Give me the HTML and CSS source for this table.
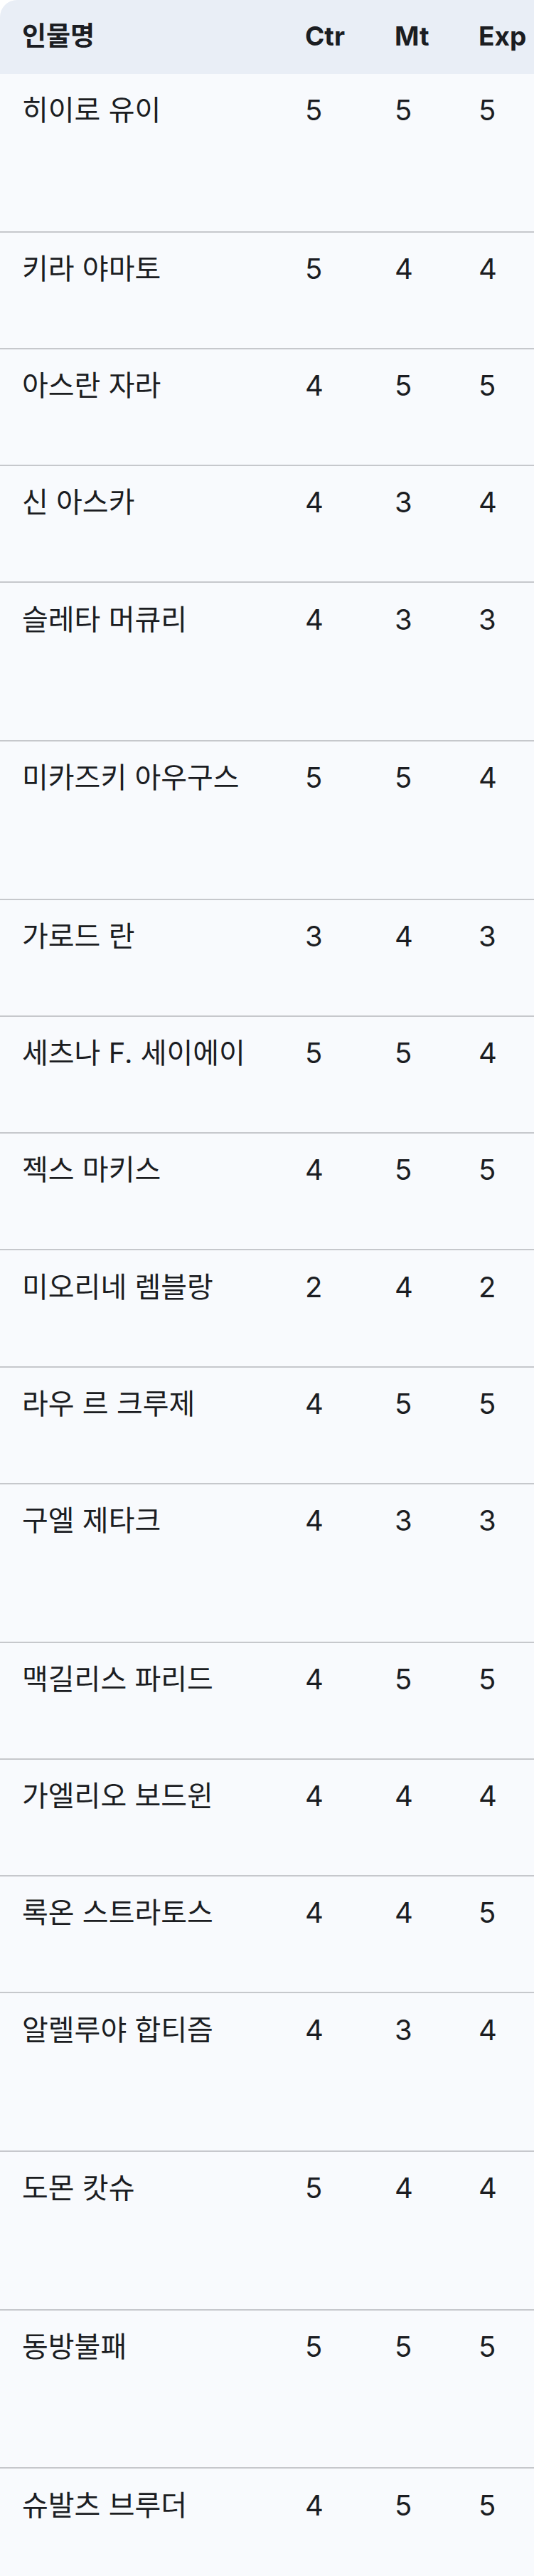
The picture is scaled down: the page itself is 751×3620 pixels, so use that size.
FILE: index.html
```html
<!DOCTYPE html>
<html lang="ko">
<head>
<meta charset="utf-8">
<title>인물 목록</title>
<link rel="stylesheet" href="styles.css">
</head>
<body>
<div class="wrap">
<table class="roster">
  <colgroup>
    <col class="c-name">
    <col class="c-ctr">
    <col class="c-mt">
    <col class="c-exp">
  </colgroup>
  <thead>
    <tr><th>인물명</th><th>Ctr</th><th>Mt</th><th>Exp</th></tr>
  </thead>
  <tbody>
    <tr class="tall"><td>히이로 유이</td><td>5</td><td>5</td><td>5</td></tr>
    <tr><td>키라 야마토</td><td>5</td><td>4</td><td>4</td></tr>
    <tr><td>아스란 자라</td><td>4</td><td>5</td><td>5</td></tr>
    <tr><td>신 아스카</td><td>4</td><td>3</td><td>4</td></tr>
    <tr class="tall"><td>슬레타 머큐리</td><td>4</td><td>3</td><td>3</td></tr>
    <tr class="tall"><td>미카즈키 아우구스</td><td>5</td><td>5</td><td>4</td></tr>
    <tr><td>가로드 란</td><td>3</td><td>4</td><td>3</td></tr>
    <tr><td>세츠나 F. 세이에이</td><td>5</td><td>5</td><td>4</td></tr>
    <tr><td>젝스 마키스</td><td>4</td><td>5</td><td>5</td></tr>
    <tr><td>미오리네 렘블랑</td><td>2</td><td>4</td><td>2</td></tr>
    <tr><td>라우 르 크루제</td><td>4</td><td>5</td><td>5</td></tr>
    <tr class="tall"><td>구엘 제타크</td><td>4</td><td>3</td><td>3</td></tr>
    <tr><td>맥길리스 파리드</td><td>4</td><td>5</td><td>5</td></tr>
    <tr><td>가엘리오 보드윈</td><td>4</td><td>4</td><td>4</td></tr>
    <tr><td>록온 스트라토스</td><td>4</td><td>4</td><td>5</td></tr>
    <tr class="tall"><td>알렐루야 합티즘</td><td>4</td><td>3</td><td>4</td></tr>
    <tr class="tall"><td>도몬 캇슈</td><td>5</td><td>4</td><td>4</td></tr>
    <tr class="tall"><td>동방불패</td><td>5</td><td>5</td><td>5</td></tr>
    <tr class="tall"><td>슈발츠 브루더</td><td>4</td><td>5</td><td>5</td></tr>
  </tbody>
</table>
</div>
</body>
</html>
```
FILE: styles.css
```css
html, body {
  margin: 0;
  padding: 0;
  background: #ffffff;
}

.wrap {
  width: 751px;
  overflow: hidden;
}

.roster {
  width: 751px;
  table-layout: fixed;
  border-collapse: separate;
  border-spacing: 0;
  font-family: "Inter", "Noto Sans CJK KR", sans-serif;
  font-size: 40px;
  line-height: 58.4px;
  color: #1b1d22;
}

.c-name { width: 398px; }
.c-ctr { width: 126px; }
.c-mt { width: 118px; }
.c-exp { width: 109px; }

.roster th {
  background: #e9eef6;
  font-size: 37px;
  font-weight: 700;
  text-align: left;
  vertical-align: top;
  white-space: nowrap;
  padding: 21.8px 0 23.8px 31px;
}

.roster th:first-child {
  border-top-left-radius: 24px;
}

.roster td {
  background: #f8fafd;
  font-weight: 400;
  text-align: left;
  vertical-align: top;
  white-space: nowrap;
  padding: 22.3px 0 81.55px 31px;
  border-bottom: 2px solid #c6c8cc;
}

.roster tr.tall td {
  padding-bottom: 139.95px;
}
```
